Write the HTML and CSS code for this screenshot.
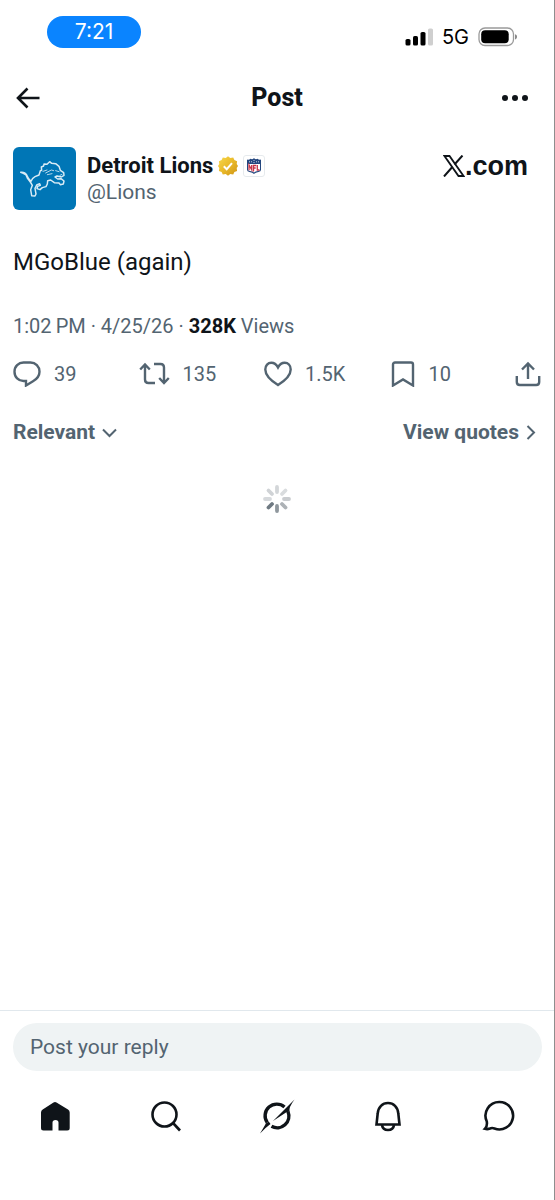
FILE: index.html
```html
<!DOCTYPE html>
<html lang="en">
<head>
<meta charset="utf-8">
<meta name="viewport" content="width=device-width, initial-scale=1">
<title>Post</title>
<link rel="stylesheet" href="styles.css">
</head>
<body>
<div class="screen">
  <div class="status">
    <span class="clock">7:21</span>
    <div class="signals">
      <svg width="28" height="18" viewBox="0 0 28 18" aria-hidden="true">
        <rect x="0.5" y="11" width="5" height="6.500" rx="1.600"/>
        <rect x="8" y="8" width="5" height="9.500" rx="1.600"/>
        <rect x="15.500" y="4" width="5" height="13.500" rx="1.600"/>
        <rect x="23" y="0.500" width="5" height="17" rx="1.600" fill="#cfcfcf"/>
      </svg>
      <span class="network">5G</span>
      <svg width="40" height="20" viewBox="0 0 40 20" aria-hidden="true">
        <rect x="1" y="1" width="34.500" height="17.500" rx="6" fill="none" stroke="#9a9a9a" stroke-width="1.300"/>
        <rect x="3.200" y="3.200" width="27.500" height="13" rx="4"/>
        <path d="M37 7.200c1.600.5 2 1.500 2 2.600s-.4 2.100-2 2.600z" fill="#8a8a8a"/>
      </svg>
    </div>
  </div>

  <header class="topbar">
    <button class="icon-button" aria-label="Back">
      <svg width="24" height="22" viewBox="0 0 24 22" fill="none" stroke="#0f1419" stroke-width="2.600"><path d="M23.500 11H2M11.500 1.500L2 11l9.500 9.500"/></svg>
    </button>
    <h1 class="title">Post</h1>
    <button class="icon-button more" aria-label="More">
      <svg width="28" height="8" viewBox="0 0 28 8" fill="#0f1419"><circle cx="4" cy="4" r="3"/><circle cx="14" cy="4" r="3"/><circle cx="24" cy="4" r="3"/></svg>
    </button>
  </header>

  <main class="post">
    <div class="author">
      <svg class="avatar" viewBox="0 0 189 189" role="img" aria-label="Detroit Lions">
        <rect width="189" height="189" fill="#0076b6"/>
        <g transform="translate(-38 -36)" fill="none" stroke="#d9ebf5" stroke-width="4.400" stroke-linejoin="round" stroke-linecap="round">
          <path d="M61 112q12-2 18 8 5 12 13 19 4-10 12-14l12-5 4-13 4-1-1-10 7-3 1-6 9 1 8-8 6 5 12 1 10 8 4 12 10 7 1 8-8 5-13-3-6 3 8 6 10-1 9 7-2 9-9 2-4-5-14-1-11-8-9 2-1 10-4 8-11 3-7 6-9-3 2-7 8-3-2-5-9 4-5 10 3 17-3 6-10-1-3-18 5-13-6-10-8-10-5-11-8-5z"/>
          <path d="M128 109l12-4M136 114l17-9 7 2M166 107l10 3M141 119l14-3M179 121l6-3" stroke-width="2.500"/>
        </g>
      </svg>
      <div class="names">
        <div class="name-row">
          <span class="name">Detroit Lions</span>
          <svg width="20" height="20" viewBox="0 0 20 20" role="img" aria-label="Verified">
            <defs><linearGradient id="gold" x1="0" y1="0" x2="1" y2="1"><stop offset="0" stop-color="#f8d94c"/><stop offset=".5" stop-color="#e9b92a"/><stop offset="1" stop-color="#cf9414"/></linearGradient></defs>
            <path fill="url(#gold)" d="M10 .3l2.300 1.800 2.900-.6 1.200 2.600 2.700 1.100-.4 2.900L20 10l-1.300 2 .4 2.900-2.700 1-1.200 2.700-2.900-.5L10 19.700l-2.300-1.600-2.900.5-1.200-2.700-2.700-1 .4-2.900L0 10l1.300-1.900-.4-2.900 2.700-1.100 1.200-2.600 2.900.6z"/>
            <path d="M5.800 10.300l2.900 2.900 5.300-6" fill="none" stroke="#fff" stroke-width="2"/>
          </svg>
          <svg width="22" height="22" viewBox="0 0 22 22" role="img" aria-label="NFL">
            <rect x=".5" y=".5" width="21" height="21" rx="2.500" fill="#fff" stroke="#e6eaed"/>
            <path d="M4 4.500q2 .8 3.500-.7Q9.500 5 11 3q1.500 2 3.500.8Q16 5.300 18 4.500v10.300q0 1.700-2.500 2.200-3 .4-4.500 2-1.500-1.600-4.500-2Q4 16.500 4 14.800z" fill="#24477f"/>
            <path d="M5 9h12v5.700q0 1-2 1.400-2.800.4-4 1.500-1.200-1.100-4-1.500-2-.4-2-1.400z" fill="#fff"/>
            <path d="M6 15.200V10l2.700 4.800V10M10.500 16.500v-6h2.700M10.500 13h2.200M14.300 10v5h2.200" fill="none" stroke="#c8364a" stroke-width="1.300"/>
            <path d="M6 6.800h3M13 6.800h3M11 5v3" stroke="#c6d2e4" stroke-width="1" stroke-dasharray="1 1"/>
          </svg>
        </div>
        <span class="handle">@Lions</span>
      </div>
      <div class="source">
        <svg width="22" height="22" viewBox="0 0 22 22" role="img" aria-label="X" fill="none" stroke="#0f1419">
          <path d="M1.500 1h5l14 20h-5z" stroke-width="1.800"/><path d="M19.500.5l-8 9M9.300 12L1 21.500" stroke-width="2"/>
        </svg><span>.com</span>
      </div>
    </div>

    <p class="body">MGoBlue (again)</p>
    <p class="meta">1:02&thinsp;PM · 4/25/26 · <strong>328K</strong> Views</p>

    <div class="actions">
      <button class="action">
        <svg width="28" height="26" viewBox="0 0 28 26"><path d="M10.500 1.500h7c5 0 9 4 9 9.200s-3.500 7.800-6.500 9.500L13 24.500V20h-2.500c-5 0-9-3.800-9-9.300s4-9.200 9-9.200z"/></svg>
        <span>39</span>
      </button>
      <button class="action">
        <svg width="31" height="26" viewBox="0 0 31 26"><path d="M1.200 8.500L6 3.500l4.800 5M6 4v14.500c0 2 1.300 3.500 3.500 3.500h6.500M15 3h6.500C23.700 3 25 4.500 25 6.500V21.500M20.200 17l4.800 5 4.800-5"/></svg>
        <span>135</span>
      </button>
      <button class="action">
        <svg width="28" height="26" viewBox="0 0 28 26"><path d="M14 24C6 19 1.300 13.500 1.300 8.500c0-4 2.700-6.700 6-6.700 3 0 5.200 1.800 6.700 4.600 1.500-2.800 3.700-4.600 6.700-4.600 3.300 0 6 2.700 6 6.700 0 5-4.700 10.500-12.700 15.500z"/></svg>
        <span>1.5K</span>
      </button>
      <button class="action">
        <svg width="26" height="26" viewBox="0 0 26 26"><path d="M3 24.500V3.500c0-1.200.8-2 2-2h16c1.200 0 2 .8 2 2v21L13 18.500z"/></svg>
        <span>10</span>
      </button>
      <button class="action" aria-label="Share">
        <svg width="26" height="26" viewBox="0 0 26 26"><path d="M13 18V3M7 8.500l6-6 6 6M1.800 15v6c0 2 1 3 3 3h16.400c2 0 3-1 3-3v-6"/></svg>
      </button>
    </div>

    <div class="filters">
      <button class="filter">Relevant
        <svg width="15" height="15" viewBox="0 0 15 15"><path d="M1 4.500l6.500 6.500L14 4.500"/></svg>
      </button>
      <a class="filter" href="#quotes">View quotes
        <svg width="10" height="15" viewBox="0 0 10 15"><path d="M1.500 1l6.500 6.500L1.500 14"/></svg>
      </a>
    </div>

    <div class="loading">
      <svg width="30" height="30" viewBox="-15 -15 30 30" role="img" aria-label="Loading" stroke-width="3.800" stroke-linecap="round">
        <path d="M0-7v-5" stroke="#d3d6d9"/>
        <path d="M5-5l3.500-3.500" stroke="#d9dcde"/>
        <path d="M7 0h5" stroke="#c9cccf"/>
        <path d="M5 5l3.500 3.500" stroke="#adb2b6"/>
        <path d="M0 7v5" stroke="#8f979d"/>
        <path d="M-5 5l-3.500 3.500" stroke="#6f7a82"/>
        <path d="M-7 0h-5" stroke="#d6d9dc"/>
        <path d="M-5-5l-3.500-3.500" stroke="#d0d3d6"/>
      </svg>
    </div>
  </main>

  <div class="reply">
    <input class="reply-input" type="text" placeholder="Post your reply" aria-label="Post your reply">
  </div>

  <nav class="tabs">
    <a href="#home" aria-label="Home"><svg width="36" height="36" viewBox="0 0 36 36"><path d="M16.500 3.500q1.500-.8 3 0L31 10.500q1.700 1 1.700 3V29q0 2.500-2.500 2.500H21.500V23.500q0-2.500-3-2.500t-3 2.500v8H6.500Q4 31.500 4 29V13.500q0-2 1.700-3z" fill="#0f1419"/></svg></a>
    <a href="#search" aria-label="Search"><svg class="line" width="36" height="36" viewBox="0 0 36 36"><circle cx="16.500" cy="15.500" r="12"/><path d="M25 24l7 7.500"/></svg></a>
    <a href="#grok" aria-label="Grok"><svg width="36" height="36" viewBox="0 0 36 36"><path d="M25.500 8A11.700 11.700 0 0 0 8.200 23.500M29 12.600A11.700 11.700 0 0 1 12.500 27.300" fill="none" stroke="#0f1419" stroke-width="3.400"/><path d="M1 34.500Q5 28 6.800 24.500L9.700 22.500 11.500 25Q6 29 1 34.500zM35.500.5L14 22l13-8.500 3.500-1Q29.500 8.500 35.500.5z" fill="#0f1419"/></svg></a>
    <a href="#notifications" aria-label="Notifications"><svg class="line" width="36" height="36" viewBox="0 0 36 36"><path d="M7.700 14.500C8.200 8 12.500 4 18 4s9.800 4 10.300 10.500L29.500 25.500h-23z"/><path d="M12 26c.5 3.500 3 5 6 5s5.500-1.500 6-5"/></svg></a>
    <a href="#messages" aria-label="Messages"><svg class="line" width="36" height="36" viewBox="0 0 36 36"><path d="M18.500 3A13.700 13.700 0 1 1 13.500 29.500Q11 28.500 9 29.500q-2.500 1-5 .3Q6.500 27.500 5.800 22.500A13.700 13.700 0 0 1 18.500 3z"/></svg></a>
  </nav>
</div>
</body>
</html>
```
FILE: styles.css
```css
* {
  box-sizing: border-box;
}

body {
  margin: 0;
  background: #fff;
  color: #0f1419;
  font-family: Roboto, "Liberation Sans", sans-serif;
  font-size: 20px;
}

button {
  padding: 0;
  border: 0;
  background: none;
  color: inherit;
  font: inherit;
}

a {
  color: inherit;
  text-decoration: none;
}

svg {
  display: block;
  flex: none;
}

.screen {
  display: flex;
  flex-direction: column;
  min-height: 100vh;
  border-right: 1px solid #8e8e8e;
}

.status {
  display: flex;
  align-items: center;
  justify-content: space-between;
  height: 64px;
  padding: 0 36px 0 47px;
  font-family: Inter, sans-serif;
}

.clock {
  width: 94px;
  border-radius: 16px;
  background: #0a84ff;
  color: #fff;
  font-size: 21px;
  line-height: 32px;
  text-align: center;
}

.signals {
  display: flex;
  align-items: center;
  gap: 9px;
  padding-top: 10px;
  color: #000;
}

.network {
  font-size: 20px;
  line-height: 20px;
}

.topbar {
  display: grid;
  grid-template-columns: 1fr auto 1fr;
  align-items: center;
  height: 68px;
  padding: 0 16px;
}

.more {
  justify-self: end;
  padding-right: 9px;
}

.title {
  margin: 0;
  font-size: 25px;
  font-weight: 800;
  line-height: 32px;
}

.post {
  flex: 1;
  padding: 15px 13px 0;
}

.author {
  display: flex;
  gap: 11px;
}

.avatar {
  width: 63px;
  height: 63px;
  border-radius: 6px;
}

.names {
  flex: 1;
  padding-top: 6px;
}

.name-row {
  display: flex;
  align-items: center;
  gap: 5px;
}

.name {
  font-size: 22px;
  font-weight: 700;
  line-height: 26px;
}

.handle {
  display: block;
  color: #536471;
  font-size: 21px;
  line-height: 26px;
}

.source {
  display: flex;
  align-items: center;
  height: 38px;
  padding-right: 13px;
  font-family: "Liberation Sans", sans-serif;
  font-size: 27px;
  font-weight: 700;
}

.body {
  margin: 36px 0 0;
  font-size: 24px;
  line-height: 32px;
}

.meta {
  margin: 35px 0 0;
  color: #536471;
  line-height: 26px;
}

.meta strong {
  color: #0f1419;
}

.actions {
  display: grid;
  grid-template-columns: repeat(4, 1fr) auto;
  margin-top: 22px;
  color: #536471;
}

.action {
  display: flex;
  align-items: center;
  gap: 13px;
  line-height: 26px;
}

.action svg {
  fill: none;
  stroke: #536471;
  stroke-width: 2.4px;
}

.filters {
  display: flex;
  justify-content: space-between;
  margin-top: 32px;
  padding-right: 5px;
  color: #536471;
  font-size: 21px;
  font-weight: 700;
  line-height: 26px;
}

.filter {
  display: flex;
  align-items: center;
  gap: 7px;
}

.filter svg {
  fill: none;
  stroke: #536471;
  stroke-width: 2px;
}

.loading {
  display: flex;
  justify-content: center;
  padding-top: 39px;
}

.reply {
  padding: 12px 12px 0 13px;
  border-top: 1px solid #e1e8ed;
}

.reply-input {
  display: block;
  width: 100%;
  height: 48px;
  padding: 0 17px;
  border: 0;
  border-radius: 24px;
  background: #eff3f4;
  color: #0f1419;
  font: inherit;
  font-size: 21px;
}

.reply-input::placeholder {
  color: #536471;
  opacity: 1;
}

.tabs {
  display: grid;
  grid-template-columns: repeat(5, 1fr);
  justify-items: center;
  padding: 28px 0 65px;
}

.line {
  fill: none;
  stroke: #0f1419;
  stroke-width: 2.6px;
}
```
